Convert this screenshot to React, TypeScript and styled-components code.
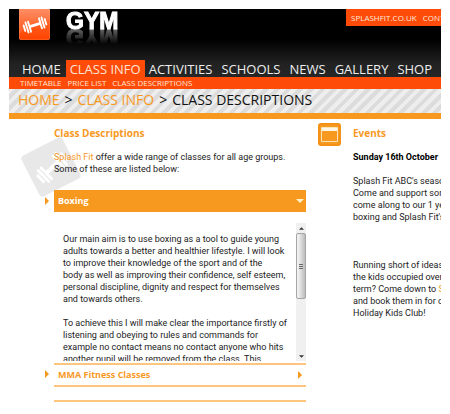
import React from "react";
import styled, { createGlobalStyle } from "styled-components";

const ORANGE = "#f8991f";
const RED = "#ff4b08";

const Global = createGlobalStyle`
  *, *::before, *::after { box-sizing: border-box; }
  body {
    margin: 0;
    background: #fff;
    color: #222;
    font-family: "Open Sans", "Noto Sans", sans-serif;
    font-size: 9px;
    line-height: 12px;
  }
  a { color: inherit; text-decoration: none; }
  h1, h2, h3, p, ul, ol { margin: 0; padding: 0; font-size: inherit; }
  p { font-family: Roboto, "Open Sans", sans-serif; }
  ul, ol { list-style: none; }
  button { font: inherit; border: 0; padding: 0; background: none; cursor: pointer; }
`;

const Page = styled.div`
  margin: 9px;
  overflow: hidden;
`;

const Header = styled.header`
  height: 68px;
  display: flex;
  flex-direction: column;
  justify-content: space-between;
  background: linear-gradient(#000 0, #000 30px, #222 55px, #262626 100%);
`;

const Brand = styled.div`
  display: flex;
  align-items: flex-start;
  padding-left: 10px;
`;

const LogoName = styled.h1`
  margin: 0 0 0 16px;
  font: bold 23px/24px "Liberation Sans", Arial, sans-serif;
  color: #fff;
  -webkit-text-stroke: 1px #fff;
  -webkit-box-reflect: below -8px linear-gradient(transparent 20%, rgba(255, 255, 255, 0.5));
`;

const TopLinks = styled.nav`
  display: flex;
  gap: 6px;
  width: 95px;
  height: 17px;
  margin-left: auto;
  padding-left: 5px;
  overflow: hidden;
  white-space: nowrap;
  background: ${RED};
  color: #ffe9dc;
  font-size: 8px;
  line-height: 18px;
`;

const MainNav = styled.ul`
  display: flex;
  padding-left: 9px;
  white-space: nowrap;
`;

const NavLink = styled.a<{ $active?: boolean }>`
  display: block;
  height: 17px;
  padding: 0 4px;
  margin-right: ${(p) => (p.$active ? 0 : 1)}px;
  font-size: 13px;
  line-height: 18px;
  color: ${(p) => (p.$active ? "#ffe3d4" : "#eee")};
  background: ${(p) => (p.$active ? RED : "transparent")};
`;

const SubNav = styled.ul`
  display: flex;
  gap: 6px;
  height: 12px;
  padding-left: 11px;
  background: ${RED};
  color: #ffe3d4;
  font-size: 8px;
  line-height: 12px;
`;

const Crumbs = styled.nav`
  display: flex;
  gap: 5px;
  height: 30px;
  padding-left: 9px;
  white-space: nowrap;
  font-size: 14px;
  line-height: 22px;
  color: #111;
  border-bottom: 6px solid ${ORANGE};
  background: repeating-linear-gradient(135deg, #eee 0, #eee 4px, #dcdcdc 4px, #dcdcdc 8px);
  a { color: ${ORANGE}; }
`;

const Columns = styled.div`
  display: grid;
  grid-template-columns: 252px minmax(0, 1fr);
  column-gap: 12px;
  padding: 4px 0 0 45px;
`;

const Main = styled.main`
  position: relative;
`;

const Watermark = styled.svg`
  position: absolute;
  left: -34px;
  top: 10px;
  z-index: -1;
`;

const Title = styled.h2`
  font-size: 10px;
  line-height: 20px;
  font-weight: bold;
  color: ${ORANGE};
`;

const Intro = styled.p`
  margin: 8px 0 15px;
  white-space: nowrap;
  a { color: ${ORANGE}; }
`;

const Item = styled.section`
  position: relative;
`;

const Marker = styled.div`
  display: flex;
  position: absolute;
  left: -11px;
  top: 7px;
`;

const ItemButton = styled.button<{ $open?: boolean }>`
  display: flex;
  align-items: center;
  justify-content: space-between;
  width: 100%;
  height: ${(p) => (p.$open ? 22 : 24)}px;
  padding: 0 2px 0 4px;
  font-weight: bold;
  color: ${(p) => (p.$open ? "#fff" : ORANGE)};
  background: ${(p) => (p.$open ? ORANGE : "transparent")};
  border: solid #fdc67c;
  border-width: ${(p) => (p.$open ? "0" : "2px 0")};
`;

const Panel = styled.div`
  display: flex;
  height: 138px;
  margin: 11px 0 2px;
  overflow: hidden;
`;

const PanelText = styled.div`
  flex: 1;
  min-width: 0;
  padding: 10px 0 0 9px;
  white-space: nowrap;
  p + p { margin-top: 12px; }
`;

const Scrollbar = styled.div`
  display: flex;
  flex-direction: column;
  width: 10px;
  background: #f0f0f0;
`;

const ScrollArrow = styled.button`
  display: grid;
  place-items: center;
  height: 10px;
`;

const Thumb = styled.div`
  display: grid;
  place-items: center;
  height: 66px;
  margin-bottom: auto;
  border: 1px solid #a5a5a5;
  border-radius: 2px;
  background: linear-gradient(90deg, #f6f6f6, #dedede 45%, #bcbcc0);
`;

const NextRule = styled.div`
  margin-top: 13px;
  border-top: 2px solid #fdc67c;
`;

const Side = styled.aside`
  display: grid;
  grid-template-columns: 23px minmax(0, 1fr);
  column-gap: 12px;
`;

const SideText = styled.div`
  overflow: hidden;
  white-space: nowrap;
  p { margin-top: 12px; }
  p:first-of-type { margin-top: 8px; color: #000; }
  p:last-of-type { margin-top: 36px; }
  a { color: ${ORANGE}; }
`;

function Lines({ of }: { of: string[] }) {
  return (
    <>
      {of.map((line, i) => (
        <React.Fragment key={line}>
          {i > 0 && <br />}
          {line}
        </React.Fragment>
      ))}
    </>
  );
}

function Dumbbell() {
  return (
    <g stroke="#fff" strokeWidth="2" strokeLinecap="round">
      <path d="M-5 0H5" strokeWidth="3" />
      <path d="M-6 -5.5V5.5M-8.8 -5.5V5.5M-11.6 -3V3M6 -5.5V5.5M8.8 -5.5V5.5M11.6 -3V3" />
    </g>
  );
}

function Triangle({ dir, color, small }: { dir: "right" | "down" | "up"; color: string; small?: boolean }) {
  const shape = { right: "M2 0L6 4L2 8Z", down: "M0 2H8L4 6Z", up: "M0 6H8L4 2Z" }[dir];
  const size = small ? 5 : 8;
  return (
    <svg width={size} height={size} viewBox="0 0 8 8" aria-hidden="true">
      <path d={shape} fill={color} />
    </svg>
  );
}

const navItems = ["HOME", "CLASS INFO", "ACTIVITIES", "SCHOOLS", "NEWS", "GALLERY", "SHOP"];

export default function App() {
  return (
    <>
      <Global />
      <Page>
        <Header>
          <Brand>
            <svg width="31" height="31" viewBox="0 0 31 31" aria-label="Gym logo">
              <defs>
                <linearGradient id="badge" x2="0" y2="1">
                  <stop offset="0" stopColor="#ff8155" />
                  <stop offset="0.5" stopColor="#ff5a1c" />
                  <stop offset="1" stopColor="#ff4300" />
                </linearGradient>
              </defs>
              <path d="M0 0H31V28Q31 31 28 31H3Q0 31 0 28Z" fill="url(#badge)" />
              <path d="M0 0H31V11Q14 10 0 25Z" fill="#fff" opacity="0.1" />
              <path d="M0 0V28Q0 31 3 31H28Q31 31 31 28V0" fill="none" stroke="#ff9a73" strokeOpacity="0.5" />
              <g transform="translate(16 16) rotate(-17) scale(0.95)">
                <Dumbbell />
              </g>
            </svg>
            <LogoName>GYM</LogoName>
            <TopLinks aria-label="Site links">
              <a href="#site">SPLASHFIT.CO.UK</a>
              <a href="#contact">CONTACT</a>
            </TopLinks>
          </Brand>
          <MainNav>
            {navItems.map((name) => (
              <li key={name}>
                <NavLink href="#nav" $active={name === "CLASS INFO"}>{name}</NavLink>
              </li>
            ))}
          </MainNav>
        </Header>
        <SubNav>
          <li><a href="#timetable">TIMETABLE</a></li>
          <li><a href="#prices">PRICE LIST</a></li>
          <li><a href="#classes">CLASS DESCRIPTIONS</a></li>
        </SubNav>
        <Crumbs aria-label="Breadcrumb">
          <a href="#home">HOME</a>
          <span>&gt;</span>
          <a href="#info">CLASS INFO</a>
          <span>&gt;</span>
          <span>CLASS DESCRIPTIONS</span>
        </Crumbs>
        <Columns>
          <Main>
            <Watermark width="68" height="68" viewBox="0 0 68 68" aria-hidden="true">
              <g transform="translate(31 34) rotate(-27)">
                <rect x="-23" y="-23" width="46" height="46" rx="4" fill="#e8e8e8" />
                <g transform="translate(1 1) rotate(-17) scale(1.4)">
                  <Dumbbell />
                </g>
              </g>
            </Watermark>
            <Title>Class Descriptions</Title>
            <Intro>
              <a href="#splash">Splash Fit</a> offer a wide range of classes for all age groups.
              <br />
              Some of these are listed below:
            </Intro>
            <Item>
              <Marker><Triangle dir="right" color={ORANGE} /></Marker>
              <ItemButton $open aria-expanded="true">
                Boxing
                <Triangle dir="down" color="#fff2c8" />
              </ItemButton>
              <Panel>
                <PanelText>
                  <p>
                    <Lines of={[
                      "Our main aim is to use boxing as a tool to guide young",
                      "adults towards a better and healthier lifestyle. I will look",
                      "to improve their knowledge of the sport and of the",
                      "body as well as improving their confidence, self esteem,",
                      "personal discipline, dignity and respect for themselves",
                      "and towards others.",
                    ]} />
                  </p>
                  <p>
                    <Lines of={[
                      "To achieve this I will make clear the importance firstly of",
                      "listening and obeying to rules and commands for",
                      "example no contact means no contact anyone who hits",
                      "another pupil will be removed from the class. This",
                    ]} />
                  </p>
                </PanelText>
                <Scrollbar>
                  <ScrollArrow aria-label="Scroll up"><Triangle dir="up" color="#333" small /></ScrollArrow>
                  <Thumb>
                    <svg width="4" height="5" viewBox="0 0 4 5" aria-hidden="true">
                      <path d="M0 .5H4M0 2.5H4M0 4.5H4" stroke="#666" />
                    </svg>
                  </Thumb>
                  <ScrollArrow aria-label="Scroll down"><Triangle dir="down" color="#333" small /></ScrollArrow>
                </Scrollbar>
              </Panel>
            </Item>
            <Item>
              <Marker><Triangle dir="right" color={ORANGE} /></Marker>
              <ItemButton aria-expanded="false">
                MMA Fitness Classes
                <Triangle dir="right" color={ORANGE} />
              </ItemButton>
            </Item>
            <NextRule />
          </Main>
          <Side>
            <svg width="23" height="23" viewBox="0 0 23 23" aria-hidden="true">
              <rect width="23" height="23" rx="3" fill={ORANGE} />
              <rect x="1" y="1" width="21" height="21" rx="2" fill="none" stroke="#f08a10" />
              <path d="M3.5 4.5H19.5V18.5H3.5Z" fill={ORANGE} stroke="#fde3b8" />
              <path d="M4 5H19V8H4Z" fill="#fff6e4" />
            </svg>
            <SideText>
              <Title>Events</Title>
              <p><b>Sunday 16th October</b></p>
              <p>
                <Lines of={[
                  "Splash Fit ABC's season",
                  "Come and support some",
                  "come along to our 1 year",
                  "boxing and Splash Fit's",
                ]} />
              </p>
              <p>
                Running short of ideas to
                <br />
                the kids occupied over
                <br />
                term? Come down to <a href="#splash">Splash</a>
                <br />
                and book them in for our
                <br />
                Holiday Kids Club!
              </p>
            </SideText>
          </Side>
        </Columns>
      </Page>
    </>
  );
}
